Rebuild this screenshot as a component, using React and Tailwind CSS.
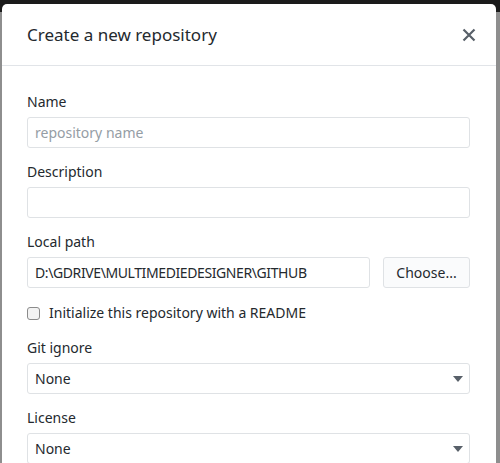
import React from 'react';

const font = { fontFamily: '"Noto Sans", "Open Sans", Arial, sans-serif' };

function Field({ label, children }) {
  return (
    <div className="flex flex-col">
      <label className="text-[14px] leading-[20px] text-[#24292e] mb-[5px]">{label}</label>
      {children}
    </div>
  );
}

function Select({ value }) {
  return (
    <div className="h-[31px] border border-[#dfe2e5] rounded-[3px] bg-white flex items-center justify-between pl-[7px] pr-[6px] text-[14px] text-[#24292e]">
      <span>{value}</span>
      <svg width="10" height="6" viewBox="0 0 10 6"><path d="M0 0h10L5 6z" fill="#586069" /></svg>
    </div>
  );
}

export default function App() {
  return (
    <div className="relative w-[500px] h-[463px] overflow-hidden bg-[#8e8e8e]" style={font}>
      {/* backdrop top strip */}
      <div className="absolute inset-x-0 top-0 h-[12px] bg-[#1b1b1b]" />
      <div className="absolute left-[2px] top-[4px] w-[494px] h-[470px] bg-white rounded-t-[5px] flex flex-col">
        <div className="h-[62px] flex items-center justify-between pl-[25px] pr-[20px] border-b border-[#e1e4e8]">
          <h1 className="text-[17px] text-[#24292e] leading-none">Create a new repository</h1>
          <svg width="14" height="14" viewBox="0 0 14 14">
            <path d="M1.5 1.5l11 11M12.5 1.5l-11 11" stroke="#586069" strokeWidth="2.2" />
          </svg>
        </div>
        <div className="flex flex-col gap-[14px] pl-[25px] pr-[26px] pt-[26px]">
          <Field label="Name">
            <div className="h-[31px] border border-[#dfe2e5] rounded-[3px] flex items-center px-[7px] text-[14px] text-[#959da5]">
              repository name
            </div>
          </Field>
          <Field label="Description">
            <div className="h-[31px] border border-[#dfe2e5] rounded-[3px]" />
          </Field>
          <Field label="Local path">
            <div className="flex gap-[13px]">
              <div className="flex-1 h-[31px] border border-[#dfe2e5] rounded-[3px] flex items-center px-[7px] text-[14px] tracking-[-0.4px] text-[#24292e]">
                D:\GDRIVE\MULTIMEDIEDESIGNER\GITHUB
              </div>
              <div className="w-[87px] h-[31px] border border-[#dfe2e5] rounded-[3px] bg-[#fafbfc] flex items-center justify-center text-[14px] text-[#24292e]">
                Choose...
              </div>
            </div>
          </Field>
          <div className="flex items-center gap-[9px] my-[1px] leading-[20px]">
            <span className="w-[13px] h-[13px] border border-[#8b8b8b] rounded-[3px] bg-[#f3f3f3]" />
            <span className="text-[14px] text-[#24292e]">Initialize this repository with a README</span>
          </div>
          <Field label="Git ignore">
            <Select value="None" />
          </Field>
          <Field label="License">
            <Select value="None" />
          </Field>
        </div>
      </div>
    </div>
  );
}
